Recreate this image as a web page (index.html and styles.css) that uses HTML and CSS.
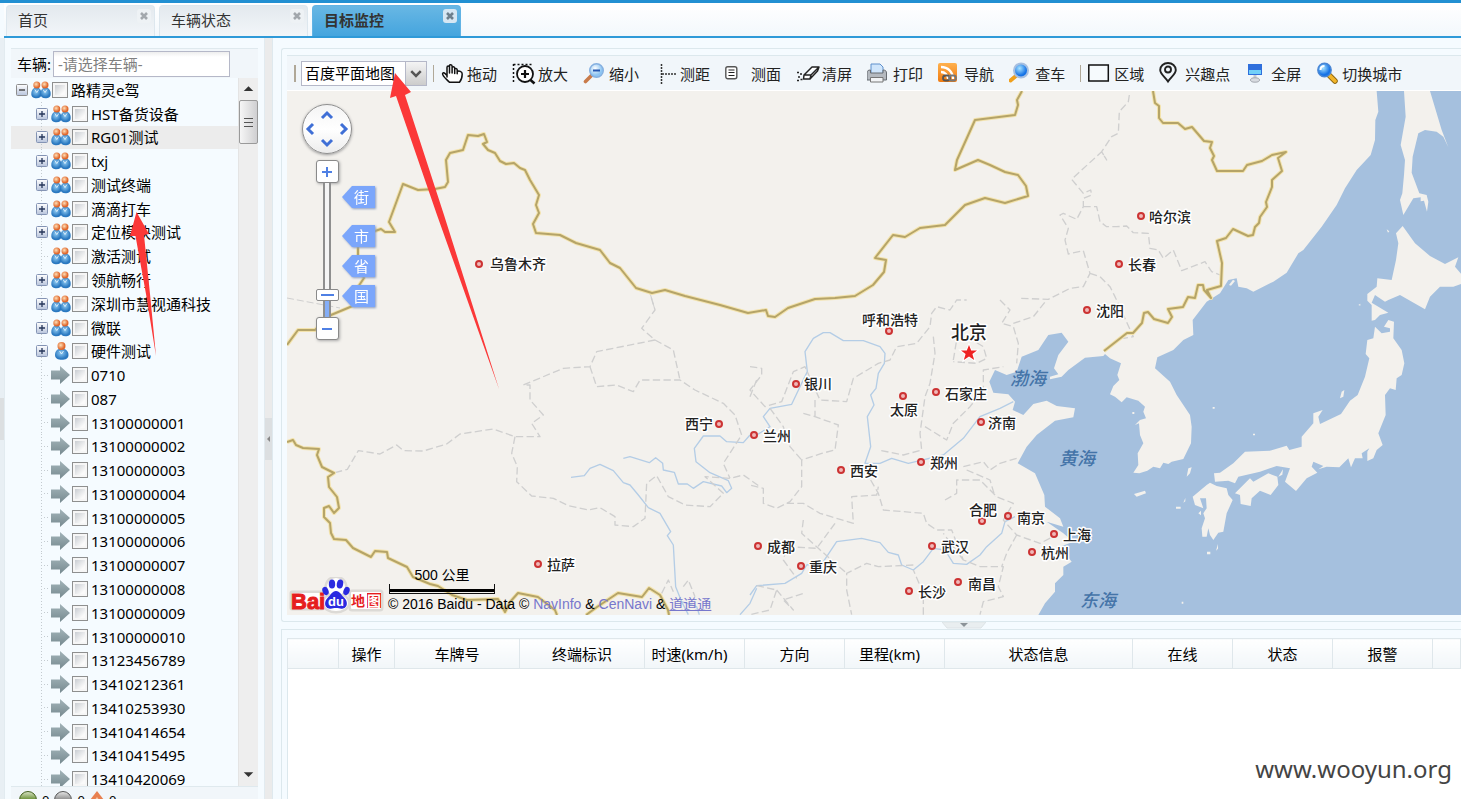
FILE: index.html
```html
<!DOCTYPE html>
<html lang="zh-CN">
<head>
<meta charset="utf-8">
<title>目标监控</title>
<link rel="stylesheet" href="styles.css">
</head>
<body>
<svg class="defs" aria-hidden="true">
  <defs>
    <radialGradient id="g-head" cx="40%" cy="40%"><stop offset="0" stop-color="#ffe0b8"/><stop offset="1" stop-color="#e0672c"/></radialGradient>
    <radialGradient id="g-body" cx="45%" cy="40%"><stop offset="0" stop-color="#8fcbf3"/><stop offset="1" stop-color="#2a78c0"/></radialGradient>
    <linearGradient id="g-arrow" x2="0" y2="1"><stop offset="0" stop-color="#a3b4b9"/><stop offset="1" stop-color="#76898f"/></linearGradient>
    <linearGradient id="g-plus" x2="0" y2="1"><stop offset="0" stop-color="#ffffff"/><stop offset="1" stop-color="#b8c4dc"/></linearGradient>
    <radialGradient id="g-lens" cx="40%" cy="35%"><stop offset="0" stop-color="#ffffff"/><stop offset="1" stop-color="#8cc4f2"/></radialGradient>
    <radialGradient id="g-blue" cx="40%" cy="35%"><stop offset="0" stop-color="#a8e4ff"/><stop offset="1" stop-color="#1673e6"/></radialGradient>
    <linearGradient id="g-rss" x2="0" y2="1"><stop offset="0" stop-color="#ffb14e"/><stop offset="1" stop-color="#f07a10"/></linearGradient>
    <symbol id="i-group" viewBox="0 0 20 18">
      <path d="M.3 13C.3 9 2.500 6.500 5.500 6.500S10.500 9 10.500 13c0 3-2 4.300-5 4.300S.3 16 .3 13z" fill="url(#g-body)"/>
      <path d="M9.500 13c0-4 2-6.500 5-6.500s5.200 2.500 5.200 6.500c0 3-2.200 4.300-5.200 4.300S9.500 16 9.500 13z" fill="url(#g-body)"/>
      <circle cx="5.800" cy="3.900" r="3.500" fill="url(#g-head)"/><circle cx="14" cy="3.900" r="3.500" fill="url(#g-head)"/>
      <path d="M3.800 8.500l2 3 2-3M12 8.500l2 3 2-3" fill="none" stroke="#fff" stroke-opacity=".7"/>
    </symbol>
    <symbol id="i-user" viewBox="0 0 20 18">
      <path d="M4 13C4 9 6.500 6.500 10.500 6.500S17.500 9 17.500 13c0 3.500-3 4.800-6.700 4.800S4 16.500 4 13z" fill="url(#g-body)"/>
      <circle cx="10.500" cy="4" r="4" fill="url(#g-head)"/>
      <path d="M8.500 9l2 3 2-3" fill="none" stroke="#fff" stroke-opacity=".7"/>
    </symbol>
    <symbol id="i-go" viewBox="0 0 20 18"><path d="M0 4.500h9V0l10 9-10 9v-4.500H0z" fill="url(#g-arrow)"/></symbol>
    <symbol id="i-plus" viewBox="0 0 12 12"><rect x=".5" y=".5" width="11" height="11" rx="1" fill="url(#g-plus)" stroke="#8494b4"/><path d="M3 6h6M6 3v6" stroke="#26365a" stroke-width="1.300"/></symbol>
    <symbol id="i-minus" viewBox="0 0 12 12"><rect x=".5" y=".5" width="11" height="11" rx="1" fill="url(#g-plus)" stroke="#8d8d8d"/><path d="M3 6h6" stroke="#333" stroke-width="1.300"/></symbol>
    <symbol id="i-close" viewBox="0 0 14 14"><path d="M4 4l6 6M10 4l-6 6" stroke="currentColor" stroke-width="2.600"/></symbol>
  </defs>
</svg>

<div class="topbar"></div>
<nav class="tabs">
  <div class="tab"><button class="tab-label">首页</button><button class="tab-close" aria-label="关闭首页"><svg><use href="#i-close"/></svg></button></div>
  <div class="tab"><button class="tab-label">车辆状态</button><button class="tab-close" aria-label="关闭车辆状态"><svg><use href="#i-close"/></svg></button></div>
  <div class="tab active"><button class="tab-label">目标监控</button><button class="tab-close" aria-label="关闭目标监控"><svg><use href="#i-close"/></svg></button></div>
</nav>

<div class="workspace">
  <div class="rail"><span class="grip-v"></span></div>
  <aside class="sidebar">
    <form class="search"><label for="vehicle">车辆:</label><input id="vehicle" type="text" placeholder="-请选择车辆-"></form>
    <div class="tree">
      <ul class="rows">
        <li class="row root"><button class="toggle" aria-label="折叠"><svg><use href="#i-minus"/></svg></button><svg class="pic"><use href="#i-group"/></svg><input type="checkbox" id="n0"><label for="n0">路精灵e驾</label></li>
        <li class="row"><button class="toggle" aria-label="展开"><svg><use href="#i-plus"/></svg></button><svg class="pic"><use href="#i-group"/></svg><input type="checkbox" id="n1"><label for="n1">HST备货设备</label></li>
        <li class="row hover"><button class="toggle" aria-label="展开"><svg><use href="#i-plus"/></svg></button><svg class="pic"><use href="#i-group"/></svg><input type="checkbox" id="n2"><label for="n2">RG01测试</label></li>
        <li class="row"><button class="toggle" aria-label="展开"><svg><use href="#i-plus"/></svg></button><svg class="pic"><use href="#i-group"/></svg><input type="checkbox" id="n3"><label for="n3">txj</label></li>
        <li class="row"><button class="toggle" aria-label="展开"><svg><use href="#i-plus"/></svg></button><svg class="pic"><use href="#i-group"/></svg><input type="checkbox" id="n4"><label for="n4">测试终端</label></li>
        <li class="row"><button class="toggle" aria-label="展开"><svg><use href="#i-plus"/></svg></button><svg class="pic"><use href="#i-group"/></svg><input type="checkbox" id="n5"><label for="n5">滴滴打车</label></li>
        <li class="row"><button class="toggle" aria-label="展开"><svg><use href="#i-plus"/></svg></button><svg class="pic"><use href="#i-group"/></svg><input type="checkbox" id="n6"><label for="n6">定位模块测试</label></li>
        <li class="row"><span class="stub"></span><svg class="pic"><use href="#i-group"/></svg><input type="checkbox" id="n7"><label for="n7">激活测试</label></li>
        <li class="row"><button class="toggle" aria-label="展开"><svg><use href="#i-plus"/></svg></button><svg class="pic"><use href="#i-group"/></svg><input type="checkbox" id="n8"><label for="n8">领航畅行</label></li>
        <li class="row"><button class="toggle" aria-label="展开"><svg><use href="#i-plus"/></svg></button><svg class="pic"><use href="#i-group"/></svg><input type="checkbox" id="n9"><label for="n9">深圳市慧视通科技</label></li>
        <li class="row"><button class="toggle" aria-label="展开"><svg><use href="#i-plus"/></svg></button><svg class="pic"><use href="#i-group"/></svg><input type="checkbox" id="n10"><label for="n10">微联</label></li>
        <li class="row"><button class="toggle" aria-label="展开"><svg><use href="#i-plus"/></svg></button><svg class="pic"><use href="#i-user"/></svg><input type="checkbox" id="n11"><label for="n11">硬件测试</label></li>
        <li class="row"><span class="stub"></span><svg class="pic"><use href="#i-go"/></svg><input type="checkbox" id="n12"><label for="n12">0710</label></li>
        <li class="row"><span class="stub"></span><svg class="pic"><use href="#i-go"/></svg><input type="checkbox" id="n13"><label for="n13">087</label></li>
        <li class="row"><span class="stub"></span><svg class="pic"><use href="#i-go"/></svg><input type="checkbox" id="n14"><label for="n14">13100000001</label></li>
        <li class="row"><span class="stub"></span><svg class="pic"><use href="#i-go"/></svg><input type="checkbox" id="n15"><label for="n15">13100000002</label></li>
        <li class="row"><span class="stub"></span><svg class="pic"><use href="#i-go"/></svg><input type="checkbox" id="n16"><label for="n16">13100000003</label></li>
        <li class="row"><span class="stub"></span><svg class="pic"><use href="#i-go"/></svg><input type="checkbox" id="n17"><label for="n17">13100000004</label></li>
        <li class="row"><span class="stub"></span><svg class="pic"><use href="#i-go"/></svg><input type="checkbox" id="n18"><label for="n18">13100000005</label></li>
        <li class="row"><span class="stub"></span><svg class="pic"><use href="#i-go"/></svg><input type="checkbox" id="n19"><label for="n19">13100000006</label></li>
        <li class="row"><span class="stub"></span><svg class="pic"><use href="#i-go"/></svg><input type="checkbox" id="n20"><label for="n20">13100000007</label></li>
        <li class="row"><span class="stub"></span><svg class="pic"><use href="#i-go"/></svg><input type="checkbox" id="n21"><label for="n21">13100000008</label></li>
        <li class="row"><span class="stub"></span><svg class="pic"><use href="#i-go"/></svg><input type="checkbox" id="n22"><label for="n22">13100000009</label></li>
        <li class="row"><span class="stub"></span><svg class="pic"><use href="#i-go"/></svg><input type="checkbox" id="n23"><label for="n23">13100000010</label></li>
        <li class="row"><span class="stub"></span><svg class="pic"><use href="#i-go"/></svg><input type="checkbox" id="n24"><label for="n24">13123456789</label></li>
        <li class="row"><span class="stub"></span><svg class="pic"><use href="#i-go"/></svg><input type="checkbox" id="n25"><label for="n25">13410212361</label></li>
        <li class="row"><span class="stub"></span><svg class="pic"><use href="#i-go"/></svg><input type="checkbox" id="n26"><label for="n26">13410253930</label></li>
        <li class="row"><span class="stub"></span><svg class="pic"><use href="#i-go"/></svg><input type="checkbox" id="n27"><label for="n27">13410414654</label></li>
        <li class="row"><span class="stub"></span><svg class="pic"><use href="#i-go"/></svg><input type="checkbox" id="n28"><label for="n28">13410415495</label></li>
        <li class="row"><span class="stub"></span><svg class="pic"><use href="#i-go"/></svg><input type="checkbox" id="n29"><label for="n29">13410420069</label></li>
      </ul>
      <div class="scrollbar">
        <svg class="scroll-arrow" viewBox="0 0 20 20"><path d="M5 12l5-5 5 5z" fill="#333"/></svg>
        <div class="thumb"><i></i><i></i><i></i></div>
        <svg class="scroll-arrow last" viewBox="0 0 20 20"><path d="M5 7h10l-5 5z" fill="#333"/></svg>
      </div>
    </div>
    <div class="counts">
      <span class="ball green"></span><span>0</span>
      <span class="ball gray"></span><span>0</span>
      <svg class="alarm" viewBox="0 0 14 18"><path d="M7 0l7 9-7 9-7-9z" fill="#e88050"/><path d="M7 6l3 4H4z" fill="#f6c9a8"/></svg><span>0</span>
    </div>
  </aside>
  <div class="splitter"><span class="grip-v"></span></div>

  <main class="main">
    <section class="map-panel">
      <div class="toolbar">
        <i class="sep thick"></i>
        <div class="combo">
          <select aria-label="地图类型"><option>百度平面地图</option></select>
          <svg viewBox="0 0 21 23" aria-hidden="true"><path d="M5.500 9l5 5 5-5" fill="none" stroke="#555" stroke-width="2.600"/></svg>
        </div>
        <i class="sep"></i>
        <div class="tools">
          <button class="tool"><svg viewBox="0 0 26 24"><path d="M6 15V5.500c0-2 2.500-2 2.500 0V11 4c0-2 2.600-1.600 2.600.2V11 6c0-1.800 2.600-1.500 2.600.2V11.500 7.500c0-1.700 2.500-1.300 2.500.2v4-2c1.500-1.600 5 0 5 2.300 0 3.500-.8 6-2.700 8.300H8.500C6 17.500 1 14 1.600 11.500 2.500 9.500 4.500 12 6 13.500z" fill="#fff" stroke="#111" stroke-width="1.500" stroke-linejoin="round"/></svg>拖动</button>
          <button class="tool"><svg viewBox="0 0 26 24"><path d="M1.500 2v19M1.500 2.500H21" fill="none" stroke="#111" stroke-width="1.500" stroke-dasharray="2 2"/><circle cx="13" cy="12" r="8" fill="#fff" stroke="#111" stroke-width="1.800"/><path d="M9 12h8M13 8v8" stroke="#111" stroke-width="2.200"/><path d="M18.500 18l4 3.500" stroke="#111" stroke-width="2.600"/></svg>放大</button>
          <button class="tool"><svg viewBox="0 0 26 24"><path d="M2.500 19.500l7-7" stroke="#c97b4a" stroke-width="3.600" stroke-linecap="round"/><circle cx="13.500" cy="8.500" r="6.800" fill="url(#g-lens)" stroke="#86b0e0" stroke-width="1.400"/><path d="M10 8.500h7" stroke="#2456b0" stroke-width="2"/></svg>缩小</button>
          <button class="tool"><svg viewBox="0 0 26 24"><path d="M7.500 2v20M8 12h15" fill="none" stroke="#333" stroke-width="1.500" stroke-dasharray="2 1"/></svg>测距</button>
          <button class="tool"><svg viewBox="0 0 26 24"><rect x=".8" y="4.800" width="11" height="12" rx="2" fill="#fff" stroke="#555" stroke-width="1.400"/><path d="M3.500 8h6M3.500 10.500h6M3.500 13.500h6" stroke="#222" stroke-width="1.200"/></svg>测面</button>
          <button class="tool"><svg viewBox="0 0 26 24"><path d="M8 13l8-8h7l-1.500 4-7.500 8H7.500z M8 13h7l8-8M15 13l-1 4" fill="#fff" stroke="#222" stroke-width="1.500" stroke-linejoin="round"/><path d="M1 10.500h2M4 12h2M2 15h2M4.500 17.500h2M1 18.500h2" stroke="#222" stroke-width="1.700"/></svg>清屏</button>
          <button class="tool"><svg viewBox="0 0 26 24"><path d="M4 2h9l3 3v7H4z" fill="#cfe5fb" stroke="#5f90cc"/><path d="M0 11c0-2 1-3 3.500-3v3H16V8c2.500 0 3.500 1 3.500 3v7H0z" fill="#b4b9bf" stroke="#676c72"/><path d="M3.500 15.500H16V20H3.500z" fill="#f2f4f6" stroke="#777"/></svg>打印</button>
          <button class="tool"><svg viewBox="0 0 26 24"><rect x="0" y="1" width="19" height="19" rx="2" fill="url(#g-rss)"/><path d="M3 5c7 0 12 5 12 12M3 10c4 0 7 3 7 7" fill="none" stroke="#fff" stroke-width="2.300"/><rect x="5" y="13.500" width="7" height="5" rx="2.500" fill="none" stroke="#555" stroke-width="1.800"/><rect x="11" y="13.500" width="7" height="5" rx="2.500" fill="none" stroke="#777" stroke-width="1.800"/></svg>导航</button>
          <button class="tool"><svg viewBox="0 0 26 24"><path d="M1.500 18.500l6-5" stroke="#f0a01c" stroke-width="4" stroke-linecap="round"/><circle cx="12" cy="8.500" r="7" fill="url(#g-blue)" stroke="#a7bfe0" stroke-width="2"/></svg>查车</button>
        </div>
        <i class="sep"></i>
        <div class="tools">
          <button class="tool"><svg viewBox="0 0 26 24"><rect x=".8" y="3" width="19.500" height="16" fill="#f6fafd" stroke="#111" stroke-width="1.500"/></svg>区域</button>
          <button class="tool"><svg viewBox="0 0 26 24"><path d="M9 19.500C6 15 1.200 12 1.200 8a7.800 7 0 0 1 15.600 0c0 4-4.800 7-7.800 11.500z" fill="none" stroke="#222" stroke-width="1.900"/><circle cx="9" cy="7.500" r="3" fill="none" stroke="#222" stroke-width="1.900"/></svg>兴趣点</button>
          <button class="tool"><svg viewBox="0 0 26 24"><rect x="3" y="2" width="14" height="11" fill="#2f6fdc"/><path d="M4 8h12v4H4z" fill="#72d0f8"/><path d="M8.500 13h3v4h-3z" fill="#c6cad0"/><ellipse cx="10" cy="18" rx="4.500" ry="2.200" fill="#d8dbe0" stroke="#a5a9b0"/></svg>全屏</button>
          <button class="tool"><svg viewBox="0 0 26 24"><path d="M13.500 13.500l5.500 5.500" stroke="#8a6410" stroke-width="5.500" stroke-linecap="round"/><path d="M13.500 13.500l5.500 5.500" stroke="#f2b52a" stroke-width="3.800" stroke-linecap="round"/><circle cx="8.500" cy="8" r="6.700" fill="url(#g-blue)" stroke="#4a86d4" stroke-width="1.400"/><path d="M4.500 8c0-3 2-4 4-4" fill="none" stroke="#fff" stroke-width="2"/></svg>切换城市</button>
        </div>
      </div>

      <div class="map">
        <svg class="canvas" viewBox="287 91 1174 524" preserveAspectRatio="xMinYMin slice">
          <rect class="land" x="287" y="91" width="1174" height="524"/>
          <g transform="translate(1060 280) scale(.33333)">
            <path class="sea" d="M950-567L955-505 946-480 945-420 932-375 890-330 855-275 830-225 785-160 730-90 715-80 680-22 640 5 580 35 560 25 535 20 530-5 505 0 480 40 440 65 398 120 400 165 370 180 340 210 292 232 285 265 330 305 350 345 390 405 395 440 393 490 370 537 335 545 325 552 310 548 300 565 280 560 262 572 238 580 220 578 235 555 233 520 250 490 240 465 237 430 225 435 240 420 258 415 250 395 255 380 235 362 200 352 185 367 165 350 150 343 160 318 178 300 172 285 183 250 150 235 135 222 130 228 75 233 25 270 5 290-30 298-30 290-5 283-18 265-5 225 25 185 5 158-35 165-65 210-115 230-130 275-160 285-195 270-212 305-200 338-155 343-135 365-142 390-110 405-80 372-40 362-10 378 45 385 40 412-15 422-70 465-100 500-127 550-75 580-47 645-45 680 0 715 10 740-40 725 10 760 40 785 0 800 35 845 10 860 10 885-15 910-15 935-45 970-65 1005H1500V-567z"/>
            <g class="land">
              <path d="M1032-567L1037-490 1022-405 1035-360 1032-315 1027-260 1020-240 1030-195 1060-245 1082-248 1082-236 1092-238 1101-205 1105-235 1100-255 1078-260 1055-322 1058-370 1075-440 1095-450 1130-445 1150-430 1165-398 1145-450 1110-567z"/>
              <path d="M1028-162L1065-110 1110-72 1155-48 1195-68 1185-40 1210-10V10L1180 20 1140 20 1110 50 1095 88 1020 45 985 60 975 65 945 45 935 68 985 98 960 105 945 120 935 122 935 75 922 62 922 42 950 20 952-5 995 0 1008-60 1015-110 1008-140z"/>
              <path d="M945 140L965 160 990 155 990 145 972 140 985 120 1002 125 1000 175 1025 210 1033 250 1025 285 1010 295 1007 330 990 325 975 345 977 405 955 460 968 495 950 510 940 535 922 543 922 515 928 505 905 520 908 535 885 535 873 562 865 535 838 562 800 560 775 568 790 558 760 545 755 560 772 578 740 595 708 633 675 605 690 565 650 558 600 575 535 590 525 610 505 602 465 605 462 580 480 578 520 550 555 515 630 512 680 497 688 510 725 500 725 470 760 430 760 400 788 390 775 410 780 432 843 402 870 362 893 345 915 290 928 235 917 222 922 180 940 175z"/>
              <path d="M525 640L570 595 580 605 625 580 652 590 655 615 632 645 600 632 575 655 572 678 542 672 540 645z"/>
              <path d="M398 650L440 615 450 608 470 618 500 625 505 645 518 660 500 700 490 755 475 758 460 780 450 765 445 745 440 770 427 770 425 745 435 715 430 700 440 685 438 655 420 655 430 685 405 675z"/>
              <path d="M222 642L255 632 258 640 230 650zM380 590L385 565 395 562 390 580zM840 355L845 335 853 330 850 350zM348 680h14v6h-14zM441 815h10v8h-10zM468 812l6-20v14zM458 381h6v5h-6zM579 461h6v5h-6zM370 668l6-14v10zM415 700l8-8v14zM655 590l14-22-2 16zM217 396h6v6h-6zM980-152l8 6-4 4zM365 965h5v6h-5zM895 75l6-4v6z"/>
              <path d="M507 15l12-16 6 4-12 14z"/>
            </g>
          </g>
          <g class="river">
            <path transform="translate(280 380) scale(.33333)" d="M873 292L913 287 930 265 960 253 1000 272 1030 308 1050 315 1075 345 1105 383 1140 400 1172 455 1162 467 1180 495 1187 620 1205 665 1225 704M1258 704L1250 680 1205 665M1030 235L1050 230 1108 248 1127 233 1148 250 1150 270 1183 277 1195 312 1222 312 1240 325 1270 305 1325 318 1340 338 1355 325 1345 302 1290 278 1248 245 1243 205 1270 168 1320 168 1340 185 1390 188 1410 165M1380 704L1410 670 1430 625"/>
            <path transform="translate(750 300) scale(.33333)" d="M20 405L60 380 40 350 60 325 125 313 155 250 172 215 165 155 190 115 220 98 240 98 280 122 340 122 390 140 405 160 403 190 385 220 378 265 362 285 372 315 352 350 362 440 345 490 390 490 425 475 475 490 510 482 580 465 640 415 690 350 750 325 790 305M0 885L20 857 105 850 155 820 170 795 220 785 260 725 335 715 390 728 415 757 445 765 455 795 490 810 520 785 550 745 585 750 610 790 650 793 690 765 710 740 755 700 765 665 795 650"/>
          </g>
          <g class="province">
            <path transform="translate(280 380) scale(.33333)" d="M165 278L202 268 235 212 300 222 350 195 370 212 430 213 500 192 540 162 640 147 705 170 780 170 755 130 790 105 750 60 750 15 730 15 850-35 930-40 950-85 1125-120 1085-155 1125-210 1110-260M705 170L695 220 712 260 710 305 755 348 820 355 865 377 925 390 960 383 1005 410 1005 435 1060 440 1095 415 1100 310 1130 287 1165 350 1215 375 1290 380 1330 340 1275 290 1350 295 1390 285 1440 320M930-40L950 20 1010 15 1060 35 1080 0 1200 0 1245 30 1330 70 1365 105 1385 165 1330 250 1350 295M1145 640L1165 600 1180 635M1210 620L1225 600 1245 650M1410 50L1430 0M1125-120L1180-90 1200 0"/>
            <path transform="translate(750 300) scale(.33333)" d="M0 200L35 205 35 225 0 270 45 320 95 305 130 215 165 200 210 300 290 305 310 235 385 190 420 180 440 140 500 130 540 80 545 40 560 20 600 30 620 0 650 0M550 110L555 160 540 250 525 290 510 400 515 450 460 465 385 450M160 340L195 350 265 375 255 450 215 460 155 480 155 560 120 605 80 625 40 610 40 565 0 555M195 300L195 350M60 325L100 380 120 440 155 480M362 540L385 580 400 630 520 640 530 670 560 690 605 690 640 780 690 800M110 610L160 610 210 640 310 670 305 590 380 585 385 560M255 670L200 745 110 740 100 780 140 835M585 600L620 580 620 540 690 540 740 590 790 610 760 660 800 705 870 730 910 710M640 500L700 485 720 510 750 490 800 475M650 510L720 540 735 590M690 800L760 800 745 860 760 890 700 905 690 944M490 795L385 800 350 790 290 820 290 870 305 944M520 944L520 880 490 810M525 380L590 420 610 370 660 320 700 270 700 210 760 200M610 180L620 120 650 110 700 140 710 175 680 190 610 185M750 0L780 30 755 70 790 80 805 130 800 190M790 70L850 50 890 0M800 705L770 760 755 800M20 857L80 870 60 930 0 944M80 870L130 930 100 900 160 880M160 660L155 700 205 745 290 820M640 780L580 700"/>
            <path transform="translate(1020 50) scale(.33333)" d="M328 135L325 155 298 185 295 250 275 260 245 305 260 330 245 305 155 388 190 430 212 420 215 435 190 445 190 470 170 508 130 490 120 495 145 535 135 570 145 612 190 602 210 670 190 710 150 715 85 748 0 745M190 470L230 470 240 515 260 530 290 530 320 528 340 548 385 550 390 595 415 600 430 625 460 600 485 662 530 645 555 635 575 665 600 675M210 670L240 680 270 710 285 740 340 860 310 865"/>
            <path class="faint" d="M287 298L340 308M650 293L655 310"/>
          </g>
          <g class="border">
            <path id="b-north" d="M287 345L298 330 315 330 331 315 355 305 356 290 364 278 358 268 358 240 375 231 381 229 385 232 395 232 389 222 403 184 418 190 435 189 445 187 448 182 446 160 450 153 463 150 468 135 478 136 484 134 487 142 483 144 488 150 495 153 500 161 506 164 514 163 520 168 525 170 530 180 539 195 536 205 539 213 533 224 536 233 560 235 576 243 600 250 610 263 620 268 636 288 652 293 665 290 685 296 720 305 748 313 766 310 768 316 775 317 788 308 815 299 835 298 855 296 873 285 884 272 886 260 875 258 893 235 905 237 920 228 945 225 965 205 985 198 1005 203 1028 196 1026 186 1018 175 1005 172 990 165 978 160 955 170 957 160 975 120 1015 115 1018 105 1017 100 1022 91"/>
            <path id="b-east" d="M1153 91L1155 103 1159 106 1159 118 1163 123 1178 123 1185 129 1192 127 1204 141 1212 142 1210 148 1214 156 1212 160 1217 171 1243 171 1247 165 1262 161 1272 155 1286 152 1278 158 1282 171 1272 180 1272 187 1266 202 1267 207 1260 217 1259 223 1255 227 1253 235 1248 236 1233 229 1226 238 1217 241 1222 263 1221 286 1207 290 1211 298 1204 290 1203 285 1198 285 1195 298 1188 297 1183 307 1168 309 1172 317 1168 323 1154 319 1148 312 1144 313 1142 323 1133 333 1127 333 1104 351"/>
            <path id="b-south" d="M287 442L293 440 296 445 303 448 319 449 317 455 322 467 334 473 328 477 329 487 337 497 339 508 334 513 329 506 324 508 324 517 330 523 331 533 334 539 346 540 353 548 371 557 375 551 387 552 388 558 407 567 413 577 430 584 438 586 452 595 467 600 498 599 505 612 510 602 518 593 538 597 555 610 557 615M586 615L597 607 618 593 642 597 649 588 660 595 668 610 669 615"/>
            <use href="#b-north" class="core"/><use href="#b-east" class="core"/><use href="#b-south" class="core"/>
          </g>
          <g class="dots">
            <circle cx="479" cy="264" r="3"/><circle cx="1141" cy="216" r="3"/><circle cx="1119" cy="264" r="3"/><circle cx="1087" cy="310" r="3"/><circle cx="889" cy="331" r="3"/><circle cx="796" cy="384" r="3"/><circle cx="903" cy="396" r="3"/><circle cx="936" cy="392" r="3"/><circle cx="981" cy="422" r="3"/><circle cx="719" cy="424" r="3"/><circle cx="754" cy="435" r="3"/><circle cx="841" cy="470" r="3"/><circle cx="921" cy="462" r="3"/><circle cx="982" cy="521" r="3"/><circle cx="1008" cy="516" r="3"/><circle cx="1054" cy="534" r="3"/><circle cx="1032" cy="552" r="3"/><circle cx="758" cy="546" r="3"/><circle cx="801" cy="566" r="3"/><circle cx="932" cy="546" r="3"/><circle cx="909" cy="591" r="3"/><circle cx="958" cy="582" r="3"/><circle cx="538" cy="564" r="3"/>
          </g>
          <path class="star" d="M969 345l2.200 5.500h5.800l-4.600 3.600 1.800 5.900-5.200-3.500-5.200 3.500 1.800-5.900-4.600-3.600h5.800z"/>
          <g class="city">
            <text x="490" y="269">乌鲁木齐</text><text x="1149" y="222">哈尔滨</text><text x="1128" y="270">长春</text><text x="1096" y="316">沈阳</text><text x="862" y="325">呼和浩特</text><text x="804" y="389">银川</text><text x="890" y="415">太原</text><text x="945" y="399">石家庄</text><text x="988" y="428">济南</text><text x="685" y="429">西宁</text><text x="763" y="441">兰州</text><text x="850" y="476">西安</text><text x="930" y="468">郑州</text><text x="969" y="515">合肥</text><text x="1017" y="523">南京</text><text x="1063" y="540">上海</text><text x="1041" y="558">杭州</text><text x="767" y="552">成都</text><text x="809" y="572">重庆</text><text x="941" y="552">武汉</text><text x="918" y="597">长沙</text><text x="968" y="589">南昌</text><text x="547" y="570">拉萨</text>
            <text class="capital" x="951" y="339">北京</text>
          </g>
          <g class="sea-name"><text x="1010" y="385">渤海</text><text x="1059" y="465">黄海</text><text x="1080" y="607">东海</text></g>
        </svg>

        <div class="nav-control">
          <div class="pan">
            <button class="n" aria-label="向上"><svg viewBox="0 0 14 14"><path d="M2 10l5-5 5 5"/></svg></button>
            <button class="w" aria-label="向左"><svg viewBox="0 0 14 14"><path d="M9 2L4 7l5 5"/></svg></button>
            <button class="e" aria-label="向右"><svg viewBox="0 0 14 14"><path d="M5 2l5 5-5 5"/></svg></button>
            <button class="s" aria-label="向下"><svg viewBox="0 0 14 14"><path d="M2 4l5 5 5-5"/></svg></button>
          </div>
          <div class="zoom">
            <button class="step" aria-label="放大"><svg viewBox="0 0 12 12"><path d="M1 6h10M6 1v10"/></svg></button>
            <div class="track"><button class="knob" aria-label="缩放级别"></button></div>
            <button class="step" aria-label="缩小"><svg viewBox="0 0 12 12"><path d="M1 6h10"/></svg></button>
          </div>
          <div class="levels">
            <button class="level street">街</button><button class="level">市</button><button class="level">省</button><button class="level">国</button>
          </div>
        </div>

        <svg class="logo" viewBox="0 0 96 38" aria-label="Baidu地图">
          <g class="glow"><rect x="4" y="16" width="30" height="15"/><rect x="63" y="15" width="30" height="17" rx="1"/><ellipse cx="48" cy="26" rx="12" ry="8"/><circle cx="48" cy="10" r="9"/></g>
          <text class="bai" x="3" y="32">Bai</text>
          <g fill="#2a2ae0"><ellipse cx="44" cy="7" rx="3.200" ry="4.500"/><ellipse cx="52" cy="7" rx="3.200" ry="4.500" transform="rotate(10 52 7)"/><ellipse cx="37.500" cy="14" rx="3" ry="4.300" transform="rotate(-20 37.500 14)"/><ellipse cx="58.500" cy="14" rx="3" ry="4.300" transform="rotate(20 58.500 14)"/><path d="M48 14c4 0 5 4 8 6.500 4 3.500 4 10-1 11-3 .6-4-.5-7-.5s-4 1.100-7 .5c-5-1-5-7.500-1-11 3-2.500 4-6.500 8-6.500z"/></g>
          <text class="du" x="48" y="29">du</text>
          <rect x="79" y="16" width="14" height="15" fill="#e61e1e"/><text class="di" x="63" y="29">地</text><text class="tu" x="79" y="29">图</text>
        </svg>
        <div class="scale"><span>500 公里</span><i></i></div>
        <p class="copy">© 2016 Baidu - Data © <a href="#">NavInfo</a> &amp; <a href="#">CenNavi</a> &amp; <a href="#" class="under">道道通</a></p>
      </div>
    </section>

    <div class="hsplit"><svg viewBox="0 0 44 7"><path d="M0 0h44l-5 6H5z" fill="#e9eef0" stroke="#dde3e6"/><path d="M18 1h8l-4 4z" fill="#8c9398"/></svg></div>

    <section class="list-panel">
      <table class="grid">
        <colgroup><col class="c-no"><col class="c-op"><col class="c-wide"><col class="c-wide"><col class="c-mid"><col class="c-mid"><col class="c-mid"><col class="c-info"><col class="c-mid"><col class="c-mid"><col class="c-mid"><col></colgroup>
        <thead><tr><th></th><th>操作</th><th>车牌号</th><th>终端标识</th><th class="unit">时速(km/h)</th><th>方向</th><th class="unit">里程(km)</th><th>状态信息</th><th>在线</th><th>状态</th><th>报警</th><th></th></tr></thead>
      </table>
    </section>
  </main>
</div>

<svg class="marks" viewBox="0 0 520 400" aria-hidden="true">
  <path d="M395 73L411 92 405 95 444 215 499 389 437 215 396 96 390 98z"/>
  <path d="M136.500 212L149 234 144 235 150 294 156 356 146 294 135.500 236 130 236z"/>
</svg>
<p class="watermark">www.wooyun.org</p>
</body>
</html>
```
FILE: styles.css
```css
* { box-sizing: border-box; }

body {
  margin: 0;
  height: 100vh;
  display: flex;
  flex-direction: column;
  overflow: hidden;
  position: relative;
  background: #f5fbff;
  color: #000;
  font: 15px/20px "Noto Sans", "Noto Sans CJK SC", sans-serif;
}

button {
  margin: 0;
  padding: 0;
  border: 0;
  background: none;
  color: inherit;
  font: inherit;
}

.defs { position: absolute; width: 0; height: 0; }

/* Tabs */
.topbar { flex: none; height: 3px; background: #2290d2; }

.tabs {
  flex: none;
  display: flex;
  gap: 4px;
  height: 35px;
  margin-left: 4px;
  padding: 2px 0 0 2px;
  border-bottom: 2px solid #2f9ad8;
  background: linear-gradient(#ffffff, #f3f8fc);
}

.tab {
  display: flex;
  justify-content: space-between;
  align-items: flex-start;
  width: 149px;
  padding: 0 3px 0 11px;
  border: 1px solid #dde7ee;
  border-bottom: 0;
  border-radius: 4px 4px 0 0;
  background: linear-gradient(#e3e9ee, #f2f6f9);
  color: #333;
}

.tab-label { height: 30px; padding-bottom: 2px; }
.tab-close { width: 14px; height: 14px; margin-top: 3px; border-radius: 3px; color: #a3a8ad; background: #eef2f5; }
.tab-close svg { display: block; width: 14px; height: 14px; }

.tab.active {
  border-color: #62b3e4;
  background: linear-gradient(#68b7e4, #45a5de);
  font-weight: bold;
}
.tab.active .tab-close { background: #d6e7f3; color: #6d7f8c; }

/* Workspace */
.workspace { flex: 1; min-height: 0; display: flex; }

.rail, .splitter {
  flex: none;
  display: flex;
  align-items: center;
  background: #ebebeb;
}
.rail { width: 4px; background: #e8eff4; }
.splitter { width: 8px; border-right: 1px solid #dfe9ee; padding-top: 40px; }
.grip-v { width: 100%; height: 42px; background: #dcdfe1; display: flex; align-items: center; justify-content: center; }
.splitter .grip-v::after { content: ""; border: 3px solid transparent; border-right-color: #888; border-left: 0; }

.sidebar {
  flex: none;
  width: 261px;
  display: flex;
  flex-direction: column;
  padding: 10px 6px 0;
  border-left: 1px solid #e2ebf0;
  border-right: 1px solid #e2ebf0;
}

.search {
  flex: none;
  display: flex;
  align-items: center;
  gap: 2px;
  height: 30px;
  padding-left: 6px;
  border-top: 1px solid #dfe9ee;
  background: #f1f6fa;
}
.search label { width: 34px; white-space: nowrap; }
.search input {
  width: 177px;
  height: 26px;
  padding: 0 4px;
  border: 1px solid #b5b8c8;
  background: linear-gradient(#eeeeee, #ffffff 5px);
  color: #000;
  font: inherit;
}
.search input::placeholder { color: #808080; opacity: 1; }

/* Tree */
.tree { flex: 1; min-height: 0; display: flex; overflow: hidden; }

.rows {
  flex: 1;
  height: 713px;
  display: grid;
  grid-template-rows: repeat(30, 1fr);
  margin: 0;
  padding: 0;
  list-style: none;
}

.row {
  display: flex;
  align-items: center;
  padding-left: 25px;
  background: repeating-linear-gradient(#c4cbd0 0 1px, transparent 1px 3px) 30px 0 / 1px 100% no-repeat;
}
.row.root { padding-left: 5px; background: none; }
.row.hover { background-color: #ececec; }

.toggle, .stub { flex: none; width: 12px; height: 12px; margin-right: 3px; }
.toggle svg { display: block; width: 12px; height: 12px; }
.stub { height: 1px; background: repeating-linear-gradient(90deg, transparent 0 2px, #c4cbd0 2px 3px) 6px 0 no-repeat; }
.pic { flex: none; width: 20px; height: 18px; }

.row input {
  appearance: none;
  flex: none;
  width: 16px;
  height: 16px;
  margin: 0 3px 0 1px;
  padding: 2px;
  border: 1px solid #8e8f8f;
  background: linear-gradient(135deg, #c9cdd2, #fafafa 80%) content-box, #f6f6f6;
}
.row label { white-space: nowrap; }

.scrollbar {
  flex: none;
  width: 20px;
  display: flex;
  flex-direction: column;
  background: #eeeeee;
  border-left: 1px solid #e4e4e4;
}
.scroll-arrow { flex: none; width: 19px; height: 22px; }
.scroll-arrow.last { margin-top: auto; }
.thumb {
  height: 44px;
  display: flex;
  flex-direction: column;
  align-items: center;
  justify-content: center;
  gap: 3px;
  border: 1px solid #9a9a9a;
  border-radius: 2px;
  background: linear-gradient(90deg, #f6f6f6, #cfcfd1);
}
.thumb i { width: 9px; height: 1px; background: #555; }

.counts {
  flex: none;
  display: flex;
  align-items: flex-start;
  height: 13px;
  padding: 4px 0 0 8px;
  gap: 5px;
  border-top: 1px solid #dfe9ee;
  background: #f1f6fa;
  font-size: 13px;
  line-height: 18px;
  overflow: hidden;
}
.ball { flex: none; width: 18px; height: 18px; border-radius: 9px; border: 1px solid #555; }
.ball.green { background: linear-gradient(#d5e0c0, #4c7a12 60%); border-color: #42601c; }
.ball.gray { background: linear-gradient(#e2e2e2, #777 60%); }
.alarm { flex: none; width: 14px; height: 18px; }

/* Map panel */
.main {
  flex: 1;
  min-width: 0;
  display: flex;
  flex-direction: column;
  padding: 10px 0 0 8px;
}

.map-panel {
  flex: 1;
  min-height: 0;
  display: flex;
  flex-direction: column;
  padding: 6px 0 6px 5px;
  border: 1px solid #dce8ed;
  border-right: 0;
  border-radius: 3px 0 0 3px;
}

.toolbar {
  flex: none;
  display: flex;
  align-items: center;
  height: 36px;
  padding-left: 7px;
  border-top: 1px solid #dce8ed;
  border-bottom: 1px solid #ffffff;
  background: #f1f6fa;
  color: #222;
}
.sep { flex: none; width: 1px; height: 17px; background: #b0a898; }
.sep.thick { width: 2px; margin-right: 5px; }

.combo {
  flex: none;
  display: flex;
  width: 126px;
  height: 25px;
  margin-right: 6px;
  border: 1px solid #b5b8c8;
  background: #fff;
  position: relative;
}
.combo select {
  appearance: none;
  width: 100%;
  padding: 0 0 0 3px;
  border: 0;
  background: transparent;
  color: #000;
  font: inherit;
}
.combo svg {
  position: absolute;
  top: 0;
  right: 0;
  width: 21px;
  height: 23px;
  border-left: 1px solid #b5b8c8;
  background: linear-gradient(#f4f4f4, #cccccc);
  pointer-events: none;
}

.tools { display: flex; gap: 15px; margin: 0 15px 0 7px; }
.tool { display: flex; align-items: center; padding-top: 2px; white-space: nowrap; }
.tool svg { flex: none; width: 26px; height: 24px; }

.map { flex: 1; min-height: 0; position: relative; overflow: hidden; background: #f3f1ed; }
.canvas { display: block; width: 100%; height: 100%; }
.land { fill: #f3f1ed; }
.sea { fill: #a5c0de; }
.river { fill: none; stroke: #b4cde6; }
.river path { stroke-width: 4px; stroke-linejoin: round; }
.province { fill: none; stroke: #cfcfcf; }
.province path { stroke-width: 4px; stroke-dasharray: 22 10; stroke-linejoin: round; }
.province .faint { stroke-width: 1px; stroke-dasharray: 7 3; }
.border { fill: none; stroke: #f3e3ad; stroke-width: 4px; stroke-linejoin: round; }
.border .core { stroke: #b5a468; stroke-width: 2px; }
.dots { fill: #f0b8b8; stroke: #cc3333; stroke-width: 2px; }
.star { fill: #ee2222; stroke: #ffffff; stroke-width: 2px; paint-order: stroke; }
.city { font: 500 14px "Noto Sans CJK SC", sans-serif; fill: #222; stroke: #ffffff; stroke-width: 3px; paint-order: stroke; stroke-linejoin: round; }
.capital { font-size: 18px; }
.sea-name { font: italic 500 18px "Noto Sans CJK SC", sans-serif; fill: #4474a8; }

/* Map controls */
.nav-control {
  position: absolute;
  top: 13px;
  left: 15px;
  width: 74px;
  display: grid;
  grid-template-columns: 50px 1fr;
}
.pan {
  width: 50px;
  height: 50px;
  display: grid;
  grid-template: repeat(3, 14px) / repeat(3, 16px);
  align-content: center;
  justify-content: center;
  place-items: center;
  grid-column: 1 / 3;
  border: 1px solid #8f8f8f;
  border-radius: 25px;
  background: linear-gradient(#f4f4f4, #ffffff 50%, #ececec);
  box-shadow: 0 1px 3px #999999;
}
.pan button { width: 14px; height: 14px; }
.pan svg { display: block; fill: none; stroke: #3f6fd6; stroke-width: 3px; }
.pan .n { grid-area: 1 / 2; }
.pan .w { grid-area: 2 / 1; }
.pan .e { grid-area: 2 / 3; }
.pan .s { grid-area: 3 / 2; }

.zoom { display: flex; flex-direction: column; align-items: center; padding-top: 6px; }
.step {
  width: 23px;
  height: 23px;
  display: grid;
  place-items: center;
  border: 1px solid #8a8a8a;
  border-radius: 3px;
  background: #ffffff;
  box-shadow: 1px 1px 3px #aaaaaa;
}
.step svg { width: 12px; height: 12px; stroke: #4f80e4; stroke-width: 2px; }
.track {
  width: 8px;
  height: 134px;
  display: flex;
  justify-content: center;
  align-items: flex-end;
  padding-bottom: 16px;
  border: solid #8f8f8f;
  border-width: 0 2px;
  background: linear-gradient(#f5f5f5 118px, #84aef8 118px);
}
.knob {
  flex: none;
  width: 23px;
  height: 12px;
  border: 1px solid #8a8a8a;
  border-radius: 2px;
  background: linear-gradient(#4f80e4, #4f80e4) center / 13px 2px no-repeat #ffffff;
}

.levels { display: flex; flex-direction: column; gap: 8px; padding-top: 32px; margin-left: -10px; filter: drop-shadow(1px 1px 1px #8a9cc0); }
.level {
  width: 33px;
  height: 22px;
  padding-left: 6px;
  background: #7ba6fb;
  color: #ffffff;
  clip-path: polygon(0 50%, 10px 0, 100% 0, 100% 100%, 10px 100%);
}
.level.street { margin-bottom: 9px; }

.logo { position: absolute; left: 1px; bottom: 0; width: 96px; height: 38px; }
.glow { fill: #ffffff; stroke: #dcdad6; stroke-width: 5px; stroke-linejoin: round; paint-order: stroke; }
.bai { font: bold 22px "Liberation Sans", sans-serif; fill: #e61e1e; stroke: #e61e1e; stroke-width: 1px; }
.du { font: bold 13px "Liberation Sans", sans-serif; fill: #ffffff; text-anchor: middle; }
.di, .tu { font: bold 14px "Noto Sans CJK SC", sans-serif; fill: #e61e1e; }
.tu { fill: #ffffff; }

.scale {
  position: absolute;
  left: 102px;
  bottom: 21px;
  width: 106px;
  font: 14px/18px "Liberation Sans", "Noto Sans CJK SC", sans-serif;
  text-align: center;
}
.scale span, .scale i { display: block; }
.scale i { height: 10px; border: 1px solid #111; border-top: 0; background: linear-gradient(#000, #000) 0 5px / 100% 3px no-repeat; }

.copy {
  position: absolute;
  left: 101px;
  bottom: 1px;
  margin: 0;
  font: 14px/20px "Liberation Sans", "Noto Sans CJK SC", sans-serif;
  white-space: nowrap;
}
.copy a { color: #7777cc; text-decoration: none; }
.copy .under { text-decoration: underline; }

/* Lower panel */
.hsplit { flex: none; height: 7px; display: flex; justify-content: center; padding-left: 186px; }
.hsplit svg { width: 44px; height: 7px; }

.list-panel {
  flex: none;
  height: 170px;
  display: flex;
  flex-direction: column;
  padding: 8px 0 0 5px;
  border: solid #dce8ed;
  border-width: 1px 0 0 1px;
}
.list-panel::after {
  content: "";
  flex: 1;
  border-left: 1px solid #dce8ed;
  background: #ffffff;
}
.grid { width: 100%; table-layout: fixed; border-collapse: collapse; }
.grid th {
  height: 30px;
  padding: 0;
  border: 1px solid #dfe7eb;
  background: linear-gradient(#ffffff, #f1f6f9);
  font-weight: normal;
}
.grid .unit { padding-right: 10px; }
.c-no { width: 51px; }
.c-op { width: 56px; }
.c-wide { width: 125px; }
.c-mid { width: 100px; }
.c-info { width: 188px; }

/* Annotations drawn over the page */
.marks { position: absolute; top: 0; left: 0; width: 520px; height: 400px; fill: #fb3838; pointer-events: none; }
.watermark {
  position: absolute;
  right: 9px;
  bottom: 15px;
  margin: 0;
  color: #444444;
  font-size: 24px;
  line-height: 30px;
}
```
